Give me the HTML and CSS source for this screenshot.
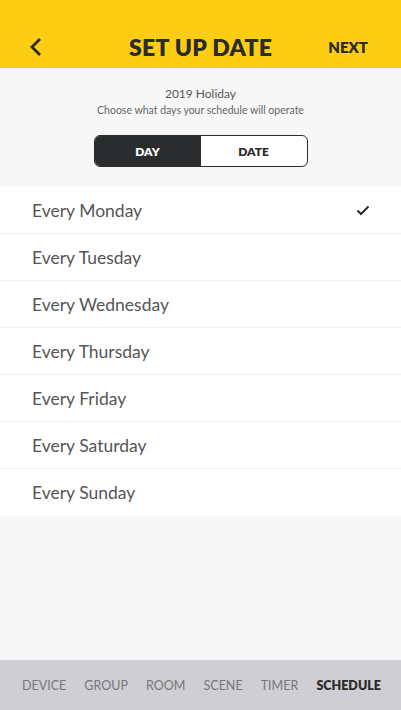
FILE: index.html
```html
<!DOCTYPE html>
<html>
<head>
<meta charset="utf-8">
<link rel="stylesheet" href="styles.css">
</head>
<body>
<div class="app">
  <header class="header">
    <span class="back">
      <svg width="14" height="18" viewBox="0 0 14 18"><path d="M10 2 L3 9 L10 16" fill="none" stroke="#2b2b2b" stroke-width="2.8" stroke-linecap="square"/></svg>
    </span>
    <h1 class="title">SET UP DATE</h1>
    <span class="next">NEXT</span>
  </header>
  <main class="content">
    <div class="intro">
      <div class="name">2019 Holiday</div>
      <div class="hint">Choose what days your schedule will operate</div>
      <div class="segment">
        <span class="seg seg-active">DAY</span>
        <span class="seg">DATE</span>
      </div>
    </div>
    <ul class="list">
      <li class="row"><span>Every Monday</span>
        <svg class="check" width="14" height="11" viewBox="0 0 14 11"><path d="M1.5 5.5 L5 9 L12.5 1.5" fill="none" stroke="#2b2b2b" stroke-width="2"/></svg>
      </li>
      <li class="row"><span>Every Tuesday</span></li>
      <li class="row"><span>Every Wednesday</span></li>
      <li class="row"><span>Every Thursday</span></li>
      <li class="row"><span>Every Friday</span></li>
      <li class="row"><span>Every Saturday</span></li>
      <li class="row"><span>Every Sunday</span></li>
    </ul>
  </main>
  <nav class="tabbar">
    <span class="tab">DEVICE</span>
    <span class="tab">GROUP</span>
    <span class="tab">ROOM</span>
    <span class="tab">SCENE</span>
    <span class="tab">TIMER</span>
    <span class="tab tab-active">SCHEDULE</span>
  </nav>
</div>
</body>
</html>
```

FILE: styles.css
```css
* { box-sizing: border-box; }
html, body { margin: 0; padding: 0; }
body {
  font-family: Lato, "Open Sans", sans-serif;
  background: #f7f7f7;
}
.app {
  width: 401px;
  height: 710px;
  display: flex;
  flex-direction: column;
}
.header {
  height: 68px;
  background: #fccd13;
  display: flex;
  align-items: center;
  padding: 26px 33px 0 29px;
}
.back { display: flex; width: 14px; }
.title {
  flex: 1;
  margin: 0;
  text-align: center;
  font-size: 23px;
  font-weight: 800;
  color: #2b2b2b;
  letter-spacing: 0.3px;
  padding-left: 30px;
}
.next {
  font-size: 15px;
  font-weight: 800;
  color: #2b2b2b;
}
.content {
  flex: 1;
  background: #f7f7f7;
}
.intro {
  display: flex;
  flex-direction: column;
  align-items: center;
  padding-top: 19px;
  padding-bottom: 20px;
}
.name {
  font-size: 12px;
  color: #555;
  line-height: 14px;
}
.hint {
  font-size: 10.5px;
  color: #666;
  line-height: 12px;
  margin-top: 3px;
}
.segment {
  margin-top: 19px;
  display: flex;
  width: 214px;
  height: 32px;
  border: 1.5px solid #2b2c2e;
  border-radius: 6px;
  overflow: hidden;
  background: #fff;
}
.seg {
  flex: 1;
  display: flex;
  align-items: center;
  justify-content: center;
  font-size: 12px;
  font-weight: 800;
  color: #2b2b2b;
}
.seg-active {
  background: #2b2c2e;
  color: #fff;
}
.list {
  list-style: none;
  margin: 0;
  padding: 0;
  background: #fff;
}
.row {
  height: 47px;
  display: flex;
  align-items: center;
  justify-content: space-between;
  padding: 0 32px 0 32px;
  font-size: 17.5px;
  color: #555;
  border-bottom: 1px solid #f1f1f1;
}
.row:last-child { border-bottom: none; }
.check { margin-right: -1px; }
.tabbar {
  height: 50px;
  background: #cfced3;
  display: flex;
  align-items: center;
  justify-content: space-between;
  padding: 0 20px 0 22px;
}
.tab {
  font-size: 12.5px;
  color: #777;
}
.tab-active {
  color: #2b2b2b;
  font-weight: 800;
}
```
